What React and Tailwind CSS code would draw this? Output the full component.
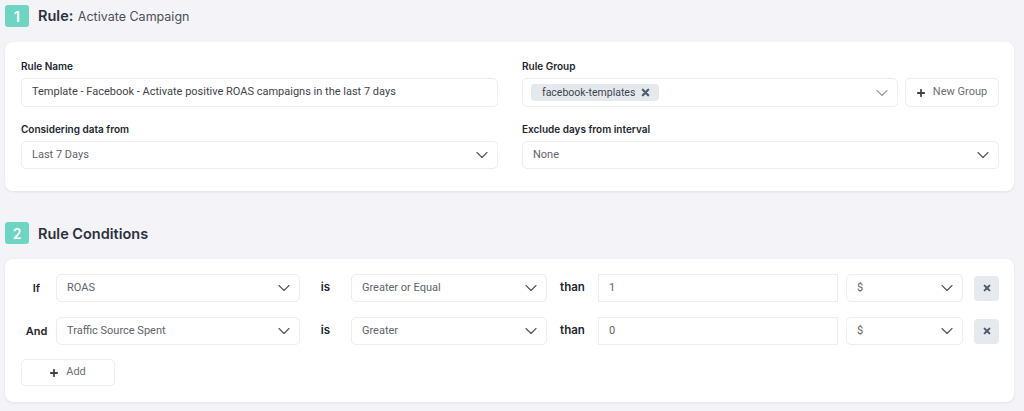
import { ChevronDown } from "lucide-react";

const inter = { fontFamily: "Inter, 'Noto Sans', sans-serif" };

const XMark = ({ className = "" }) => (
  <svg viewBox="0 0 10 10" className={className} fill="none">
    <path d="M2 2L8 8M8 2L2 8" stroke="currentColor" strokeWidth="2.5" strokeLinecap="round" />
  </svg>
);

const Plus = ({ className = "" }) => (
  <svg viewBox="0 0 10 10" className={className} fill="none">
    <path d="M5 1V9M1 5H9" stroke="currentColor" strokeWidth="2.2" strokeLinecap="round" />
  </svg>
);

const Select = ({ value, className = "", chevron = "text-[#55585f]" }) => (
  <div
    className={`flex items-center justify-between bg-white border border-[#ececf1] rounded-[5px] pl-[10px] pr-[5px] h-[28px] ${className}`}
  >
    <span className="text-[11px] text-[#606369] font-['Roboto']">{value}</span>
    <ChevronDown className={`w-[20px] h-[20px] ${chevron}`} strokeWidth={1.4} />
  </div>
);

const Label = ({ children }) => (
  <div className="text-[10px] leading-[16px] font-semibold text-[#22252e] mb-[4px]" style={inter}>
    {children}
  </div>
);

const SectionTitle = ({ num, children }) => (
  <div className="flex items-center gap-[9px] h-[22px]">
    <div
      className="w-[24px] h-[22px] rounded-[3px] bg-[#6dd5c1] text-white text-[14px] font-semibold flex items-center justify-center"
      style={inter}
    >
      {num}
    </div>
    <div className="text-[#2c303d] leading-[22px]" style={inter}>
      {children}
    </div>
  </div>
);

const ConditionRow = ({ label, field, op, val }) => (
  <div className="flex items-center">
    <div className="w-[31px] text-center text-[11px] font-semibold text-[#22252e]" style={inter}>
      {label}
    </div>
    <Select value={field} className="ml-[4px] w-[244px]" />
    <div className="w-[51px] text-center text-[11.5px] font-semibold text-[#22252e]" style={inter}>
      is
    </div>
    <Select value={op} className="w-[196px]" />
    <div className="w-[51px] text-center text-[11.5px] font-semibold text-[#22252e]" style={inter}>
      than
    </div>
    <div className="w-[240px] h-[28px] flex items-center bg-white border border-[#ececf1] pl-[10px] text-[11px] text-[#606369] font-['Roboto']">
      {val}
    </div>
    <Select value="$" className="ml-[8px] w-[117px]" />
    <button className="ml-[11px] w-[25px] h-[25px] rounded-[4px] bg-[#e6e9ee] flex items-center justify-center text-[#4f5a6c]">
      <XMark className="w-[8px] h-[8px]" />
    </button>
  </div>
);

export default function App() {
  return (
    <div className="w-[1024px] h-[411px] bg-[#f3f3f8] pl-[5px] pr-[10px] pt-[5px] overflow-hidden">
      <SectionTitle num="1">
        <span className="text-[14.5px] font-semibold">Rule:</span>{" "}
        <span className="text-[12.5px] text-[#4b4f5a]">Activate Campaign</span>
      </SectionTitle>

      <div className="mt-[15px] bg-white rounded-[8px] shadow-[0_1px_3px_rgba(0,0,0,0.08)] pl-[16px] pr-[15px] pt-[16px] pb-[22px] grid grid-cols-2 gap-x-[24px]">
        <div>
          <Label>Rule Name</Label>
          <div className="h-[29px] flex items-center bg-white border border-[#ececf1] rounded-[5px] pl-[10px] text-[11px] text-[#3f424a] font-['Roboto']">
            Template - Facebook - Activate positive ROAS campaigns in the last 7 days
          </div>
          <div className="mt-[14px]">
            <Label>Considering data from</Label>
            <Select value="Last 7 Days" />
          </div>
        </div>
        <div>
          <Label>Rule Group</Label>
          <div className="flex gap-[7px]">
            <div className="flex-1 h-[29px] flex items-center justify-between bg-white border border-[#ececf1] rounded-[5px] pl-[8px] pr-[5px]">
              <span className="h-[17px] flex items-center gap-[6px] bg-[#e5e9ee] rounded-[4px] pl-[11px] pr-[9px] text-[10.5px] text-[#3f424a] font-['Roboto']">
                facebook-templates
                <XMark className="w-[9px] h-[9px] text-[#4f5a6c]" />
              </span>
              <ChevronDown className="w-[20px] h-[20px] text-[#9a9ca2]" strokeWidth={1.4} />
            </div>
            <button className="w-[94px] h-[29px] flex items-center justify-center gap-[8px] bg-white border border-[#ececf1] rounded-[5px] text-[11px] text-[#6b6e75] font-['Roboto']">
              <Plus className="w-[8px] h-[8px] text-[#3f424a]" />
              New Group
            </button>
          </div>
          <div className="mt-[14px]">
            <Label>Exclude days from interval</Label>
            <Select value="None" />
          </div>
        </div>
      </div>

      <div className="mt-[31px]">
        <SectionTitle num="2">
          <span className="text-[14.5px] font-semibold">Rule Conditions</span>
        </SectionTitle>
      </div>

      <div className="mt-[15px] bg-white rounded-[8px] shadow-[0_1px_3px_rgba(0,0,0,0.08)] pl-[16px] pt-[15px] pb-[16px] flex flex-col gap-[15px]">
        <ConditionRow label="If" field="ROAS" op="Greater or Equal" val="1" />
        <ConditionRow label="And" field="Traffic Source Spent" op="Greater" val="0" />
        <button className="-mt-[1px] w-[94px] h-[27px] flex items-center justify-center gap-[8px] bg-white border border-[#ececf1] rounded-[5px] text-[11px] text-[#6b6e75] font-['Roboto']">
          <Plus className="w-[8px] h-[8px] text-[#3f424a]" />
          Add
        </button>
      </div>
    </div>
  );
}
